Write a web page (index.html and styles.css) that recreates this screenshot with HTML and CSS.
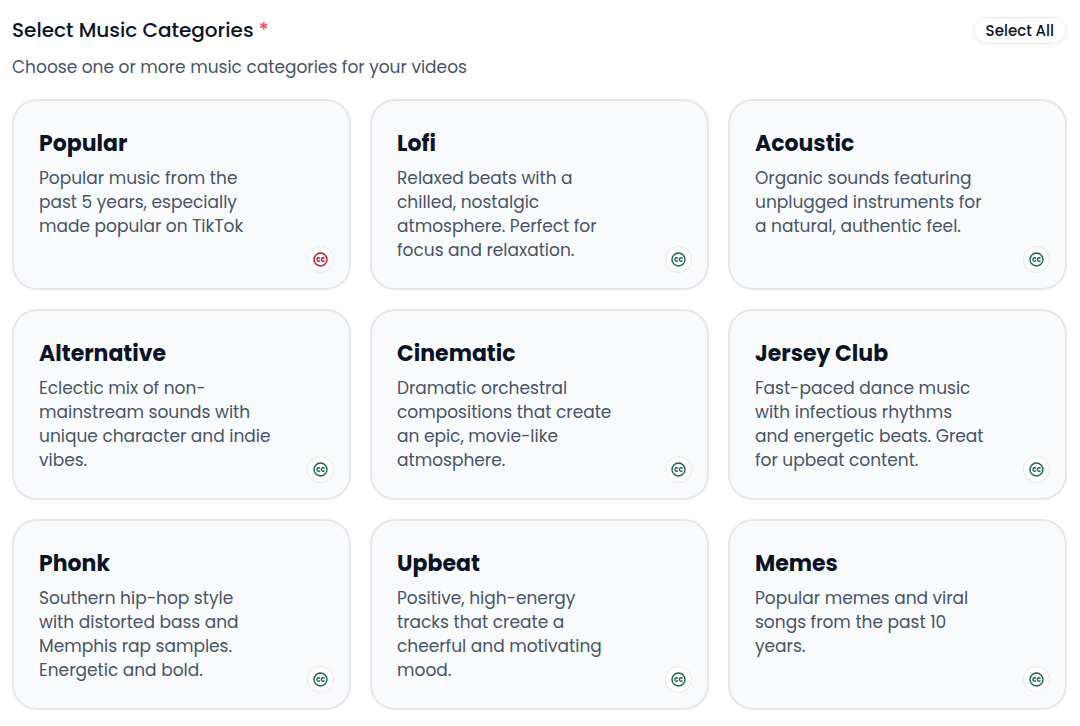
FILE: index.html
```html
<!DOCTYPE html>
<html lang="en">
<head>
<meta charset="utf-8">
<meta name="viewport" content="width=device-width, initial-scale=1">
<title>Select Music Categories</title>
<link rel="stylesheet" href="styles.css">
</head>
<body>
<svg class="sprite" aria-hidden="true">
  <symbol id="cc" viewBox="0 0 24 24">
    <circle cx="12" cy="12" r="10.4"/>
    <path d="M10.6 9.8a2.7 2.7 0 0 0-3.8.5 2.9 2.9 0 0 0 0 3.4 2.7 2.7 0 0 0 3.8.5"/>
    <path d="M17.8 9.8a2.7 2.7 0 0 0-3.8.5 2.9 2.9 0 0 0 0 3.4 2.7 2.7 0 0 0 3.8.5"/>
  </symbol>
</svg>
<main class="picker">
  <header class="picker-header">
    <h2 class="picker-title">Select Music Categories <span class="required">*</span></h2>
    <button type="button" class="select-all">Select All</button>
  </header>
  <p class="picker-hint">Choose one or more music categories for your videos</p>
  <div class="grid">
    <button type="button" class="card">
      <span class="card-title">Popular</span>
      <span class="card-text">Popular music from the<br>past 5 years, especially<br>made popular on TikTok</span>
      <span class="badge badge-restricted"><svg class="icon" aria-hidden="true"><use href="#cc"/></svg></span>
    </button>
    <button type="button" class="card">
      <span class="card-title">Lofi</span>
      <span class="card-text">Relaxed beats with a<br>chilled, nostalgic<br>atmosphere. Perfect for<br>focus and relaxation.</span>
      <span class="badge"><svg class="icon" aria-hidden="true"><use href="#cc"/></svg></span>
    </button>
    <button type="button" class="card">
      <span class="card-title">Acoustic</span>
      <span class="card-text">Organic sounds featuring<br>unplugged instruments for<br>a natural, authentic feel.</span>
      <span class="badge"><svg class="icon" aria-hidden="true"><use href="#cc"/></svg></span>
    </button>
    <button type="button" class="card">
      <span class="card-title">Alternative</span>
      <span class="card-text">Eclectic mix of non-<br>mainstream sounds with<br>unique character and indie<br>vibes.</span>
      <span class="badge"><svg class="icon" aria-hidden="true"><use href="#cc"/></svg></span>
    </button>
    <button type="button" class="card">
      <span class="card-title">Cinematic</span>
      <span class="card-text">Dramatic orchestral<br>compositions that create<br>an epic, movie-like<br>atmosphere.</span>
      <span class="badge"><svg class="icon" aria-hidden="true"><use href="#cc"/></svg></span>
    </button>
    <button type="button" class="card">
      <span class="card-title">Jersey Club</span>
      <span class="card-text">Fast-paced dance music<br>with infectious rhythms<br>and energetic beats. Great<br>for upbeat content.</span>
      <span class="badge"><svg class="icon" aria-hidden="true"><use href="#cc"/></svg></span>
    </button>
    <button type="button" class="card">
      <span class="card-title">Phonk</span>
      <span class="card-text">Southern hip-hop style<br>with distorted bass and<br>Memphis rap samples.<br>Energetic and bold.</span>
      <span class="badge"><svg class="icon" aria-hidden="true"><use href="#cc"/></svg></span>
    </button>
    <button type="button" class="card">
      <span class="card-title">Upbeat</span>
      <span class="card-text">Positive, high-energy<br>tracks that create a<br>cheerful and motivating<br>mood.</span>
      <span class="badge"><svg class="icon" aria-hidden="true"><use href="#cc"/></svg></span>
    </button>
    <button type="button" class="card">
      <span class="card-title">Memes</span>
      <span class="card-text">Popular memes and viral<br>songs from the past 10<br>years.</span>
      <span class="badge"><svg class="icon" aria-hidden="true"><use href="#cc"/></svg></span>
    </button>
  </div>
</main>
</body>
</html>
```
FILE: styles.css
```css
* {
  box-sizing: border-box;
}

body {
  margin: 0;
  background: #fff;
  color: #0b1426;
  font-family: Poppins, Inter, "Open Sans", sans-serif;
}

button {
  font: inherit;
  color: inherit;
  cursor: pointer;
}

.sprite {
  display: none;
}

.picker {
  padding: 16px 13px 16px 12px;
}

.picker-header {
  display: flex;
  align-items: center;
  justify-content: space-between;
}

.picker-title {
  margin: 0;
  font-size: 20px;
  font-weight: 500;
  line-height: 28px;
}

.required {
  color: #e5484d;
}

.select-all {
  padding: 0 12px;
  border: 1px solid #e5e7eb;
  border-radius: 14px;
  background: #fff;
  font-size: 15px;
  font-weight: 500;
  line-height: 25px;
}

.picker-hint {
  margin: 11px 0 20px;
  color: #475467;
  font-size: 17px;
  line-height: 24px;
}

.grid {
  display: grid;
  grid-template-columns: repeat(3, minmax(0, 1fr));
  gap: 19px;
}

.card {
  position: relative;
  display: flex;
  flex-direction: column;
  justify-content: flex-start;
  padding: 26px 25px;
  border: 2px solid #e5e7eb;
  border-radius: 25px;
  background: #f9fafc;
  text-align: left;
}

.card-title {
  margin-bottom: 5px;
  font-size: 22px;
  font-weight: 700;
  line-height: 34px;
}

.card-text {
  color: #475467;
  font-size: 17px;
  line-height: 24px;
}

.badge {
  position: absolute;
  right: 15px;
  bottom: 15px;
  display: flex;
  align-items: center;
  justify-content: center;
  width: 27px;
  height: 27px;
  border: 1px solid #e5e7eb;
  border-radius: 50%;
  background: #fff;
  color: #166544;
}

.badge-restricted {
  color: #b9131f;
}

.icon {
  width: 15px;
  height: 15px;
  fill: none;
  stroke: currentColor;
  stroke-width: 2.2;
  stroke-linecap: round;
  stroke-linejoin: round;
}
```
